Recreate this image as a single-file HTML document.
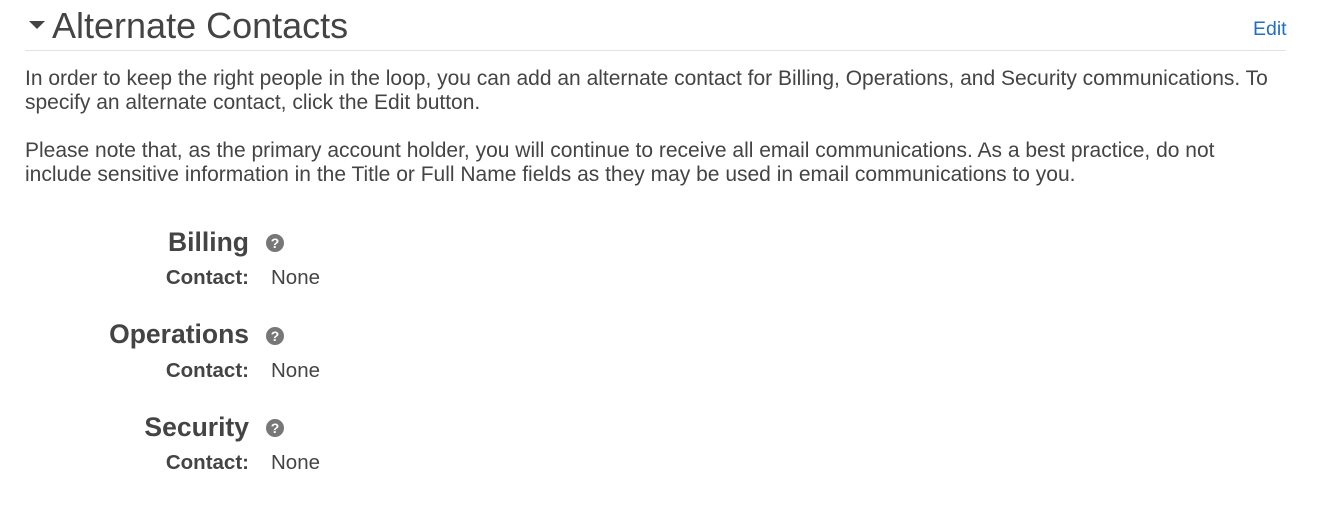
<!DOCTYPE html>
<html><head><style>
body{margin:0;width:1325px;height:507px;background:#fff;font-family:"Liberation Sans",Arial,sans-serif;color:#444;position:relative;overflow:hidden}
.a{position:absolute;white-space:nowrap}
.h{font-weight:bold;font-size:26.5px;right:1076px}
.l{font-weight:bold;font-size:20.5px;right:1076px}
.v{font-size:20.5px;left:271px}
.q{position:absolute;width:18px;height:18px;border-radius:50%;background:#777;color:#fff;font-weight:bold;font-size:14px;line-height:18px;text-align:center;left:266px}
p{margin:0}
</style></head><body>
<div class="a" style="left:29px;top:21px;width:0;height:0;border-left:8px solid transparent;border-right:8px solid transparent;border-top:8px solid #444"></div>
<div class="a" style="left:52px;top:5px;font-size:36px;color:#444">Alternate Contacts</div>
<div class="a" style="left:1253px;top:18px;font-size:19.5px;color:#1f6fc5">Edit</div>
<div class="a" style="left:25px;top:50px;width:1261px;height:1px;background:#e1e1e1"></div>
<div class="a" style="left:25px;top:67px;font-size:21px;line-height:24px;white-space:normal;width:1255px">
<p>In order to keep the right people in the loop, you can add an alternate contact for Billing, Operations, and Security communications. To specify an alternate contact, click the Edit button.</p><br>
<p>Please note that, as the primary account holder, you will continue to receive all email communications. As a best practice, do not include sensitive information in the Title or Full Name fields as they may be used in email communications to you.</p>
</div>
<div class="a h" style="top:227px">Billing</div><div class="q" style="top:234px">?</div>
<div class="a l" style="top:266px">Contact:</div><div class="a v" style="top:266px">None</div>
<div class="a h" style="top:319px">Operations</div><div class="q" style="top:327px">?</div>
<div class="a l" style="top:359px">Contact:</div><div class="a v" style="top:359px">None</div>
<div class="a h" style="top:412px">Security</div><div class="q" style="top:419px">?</div>
<div class="a l" style="top:451px">Contact:</div><div class="a v" style="top:451px">None</div>
</body></html>
